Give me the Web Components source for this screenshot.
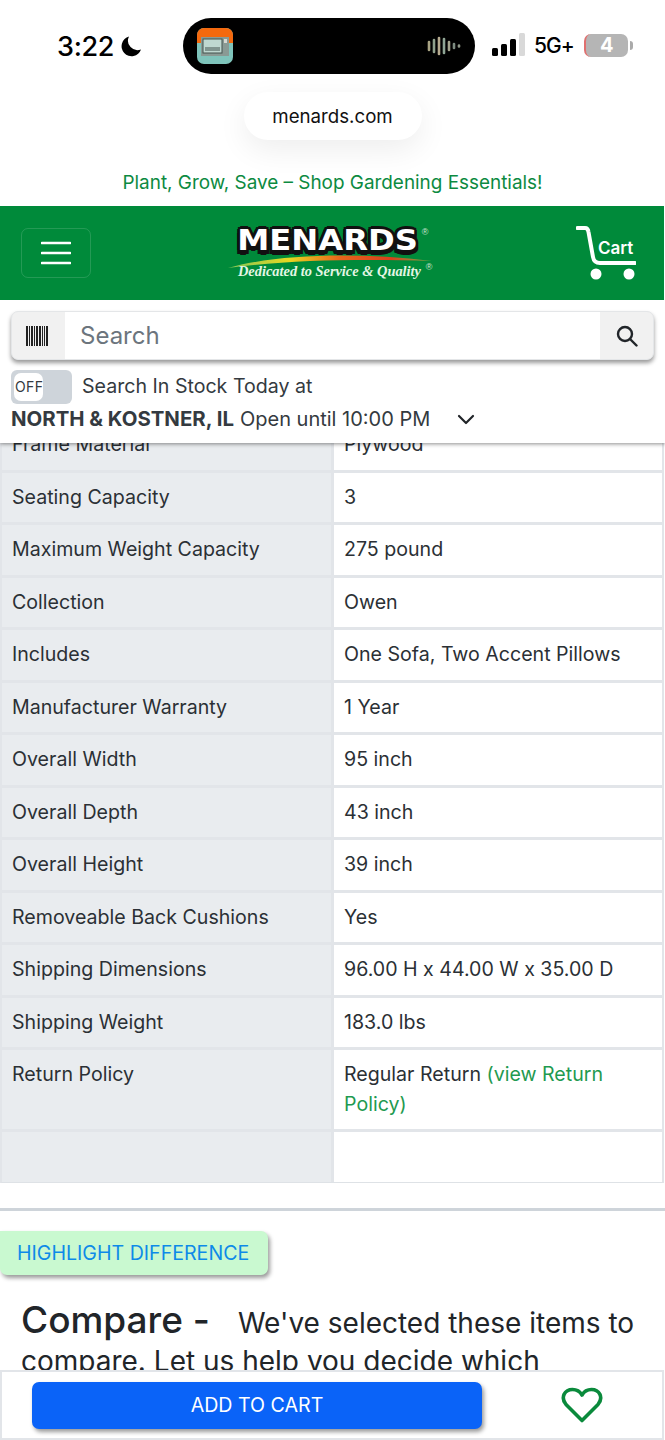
<!DOCTYPE html>
<html lang="en">
<head>
<meta charset="utf-8">
<title>Menards</title>
<style>
  html, body { margin: 0; background: #fff; }
  body { font-family: Inter, "Liberation Sans", sans-serif; color: #212529; }
  product-page { width: 665px; height: 1440px; }
  a { color: #1f9a50; text-decoration: none; }
</style>
</head>
<body>
<product-page>
  <phone-status slot="top"></phone-status>
  <site-pill slot="top">menards.com</site-pill>
  <promo-line slot="top">Plant, Grow, Save – Shop Gardening Essentials!</promo-line>
  <menards-header slot="top"></menards-header>
  <search-bar slot="top"></search-bar>
  <stock-filter slot="top"></stock-filter>

  <spec-table>
    <spec-row label="Frame Material">Plywood</spec-row>
    <spec-row label="Seating Capacity">3</spec-row>
    <spec-row label="Maximum Weight Capacity">275 pound</spec-row>
    <spec-row label="Collection">Owen</spec-row>
    <spec-row label="Includes">One Sofa, Two Accent Pillows</spec-row>
    <spec-row label="Manufacturer Warranty">1 Year</spec-row>
    <spec-row label="Overall Width">95 inch</spec-row>
    <spec-row label="Overall Depth">43 inch</spec-row>
    <spec-row label="Overall Height">39 inch</spec-row>
    <spec-row label="Removeable Back Cushions">Yes</spec-row>
    <spec-row label="Shipping Dimensions">96.00 H x 44.00 W x 35.00 D</spec-row>
    <spec-row label="Shipping Weight">183.0 lbs</spec-row>
    <spec-row label="Return Policy"><div>Regular Return <a href="#">(view Return</a></div><div><a href="#">Policy)</a></div></spec-row>
    <spec-row label="">&nbsp;</spec-row>
  </spec-table>
  <compare-intro></compare-intro>

  <cart-bar slot="bottom"></cart-bar>
</product-page>

<script>
// helper: every element gets its markup in an open shadow root
const define = (name, html, setup) => {
  const template = document.createElement('template')
  template.innerHTML = html

  customElements.define(name, class extends HTMLElement {
    constructor () {
      super()
      this.attachShadow({ mode: 'open' })
      this.shadowRoot.appendChild(template.content.cloneNode(true))
    }

    connectedCallback () {
      if (setup) setup(this)
    }
  })
}

define('product-page', `
<style>
  :host { display: flex; flex-direction: column; position: relative; overflow: hidden; }
  .top { position: relative; z-index: 2; background: #fff; height: 443px; box-shadow: 0 1px 4px rgba(0,0,0,.45); flex: none; }
  .content { flex: 1; overflow: hidden; }
  .inner { margin-top: -23px; }
  .bottom { position: absolute; left: 0; right: 0; bottom: 0; z-index: 3; }
</style>
<div class="top"><slot name="top"></slot></div>
<div class="content"><div class="inner"><slot></slot></div></div>
<div class="bottom"><slot name="bottom"></slot></div>
`)

define('phone-status', `
<style>
  :host { display: flex; align-items: center; height: 56px; padding: 18px 0 0 57px; color: #000; }
  .time { font: 500 27px/1 Inter, sans-serif; width: 56px; letter-spacing: -.3px; }
  .moon { margin-left: 7px; width: 22px; height: 22px; }
  .island { margin-left: 41px; width: 292px; height: 56px; border-radius: 28px; background: #000; display: flex; align-items: center; justify-content: space-between; padding: 0 14px; box-sizing: border-box; }
  .right { display: flex; align-items: center; margin-left: 16px; }
  .net { font: 500 21px/1 Inter, sans-serif; margin: -2px 0 0 9px; letter-spacing: -1px; }
  .batt { display: flex; align-items: center; margin: -2px 0 0 10px; }
  .cell { width: 44px; height: 23px; border-radius: 7px; background: #b5b5b5; border-left: 2px solid #e0706f; box-sizing: border-box; color: #fff; font: 700 20px/23px Inter, sans-serif; text-align: center; }
  .nub { width: 3px; height: 9px; margin-left: 2px; background: #aaa; border-radius: 0 3px 3px 0; }
</style>
<span class="time">3:22</span>
<svg class="moon" viewBox="0 0 22 22"><path d="M9 1.5A10 10 0 1 0 21 14.5 9.5 9.5 0 0 1 9 1.5Z" fill="#000"/></svg>
<div class="island">
  <svg width="36" height="36" viewBox="0 0 36 36">
    <rect width="36" height="36" rx="7" fill="#7fc4bb"/>
    <path d="M0 15V7a7 7 0 0 1 7-7h22a7 7 0 0 1 7 7v8Z" fill="#f4690e"/>
    <rect x="4" y="9" width="28" height="19" fill="#8a9a94"/>
    <rect x="6" y="11" width="19" height="14" fill="#bfd8d0" stroke="#43524e"/>
    <path d="M8 20h15M8 22h15" stroke="#43524e"/>
    <rect x="27" y="11" width="3" height="4" fill="#d8d8d0"/>
  </svg>
  <svg width="34" height="20" viewBox="0 0 34 20" stroke-width="2.6" stroke-linecap="round">
    <path d="M2 6v8" stroke="#a8a383"/><path d="M7 4v12" stroke="#8fa08c"/><path d="M12 2v16" stroke="#b6aa8e"/>
    <path d="M17 3v14" stroke="#8fa595"/><path d="M22 6v8" stroke="#a5a58e"/><path d="M27 8v4" stroke="#7d8b80"/><path d="M32 9.5v1" stroke="#8f9788"/>
  </svg>
</div>
<div class="right">
  <svg width="34" height="28" viewBox="0 0 34 28" style="margin-top:-3px">
    <rect x="1" y="17" width="6" height="8" rx="1.5"/><rect x="10" y="13" width="6" height="12" rx="1.5"/>
    <rect x="19" y="8" width="6" height="17" rx="1.5"/><rect x="28" y="2" width="6" height="23" rx="1.5" fill="#d9d9d9"/>
  </svg>
  <span class="net">5G+</span>
  <span class="batt"><span class="cell">4</span><span class="nub"></span></span>
</div>
`)

define('site-pill', `
<style>
  :host { display: block; width: 178px; height: 48px; margin: 18px auto 0; background: #fff; border-radius: 24px;
    box-shadow: 0 10px 30px rgba(0,0,0,.07); font: 400 18.7px/50px Inter, sans-serif; color: #111; text-align: center; }
</style>
<slot></slot>
`)

define('promo-line', `
<style>
  :host { display: block; margin-top: 30px; height: 36px; font: 400 18.9px/26px Inter, sans-serif; color: #0c8a41; text-align: center; }
</style>
<slot></slot>
`)

define('menards-header', `
<style>
  :host { display: flex; align-items: center; justify-content: space-between; height: 94px; margin-right: 1px; background: #008a3a; padding: 0 28px 0 21px; box-sizing: border-box; }
  .burger { width: 70px; height: 50px; border: 1px solid rgba(255,255,255,.14); border-radius: 7px; box-sizing: border-box; display: flex; align-items: center; justify-content: center; }
  .logo { position: relative; isolation: isolate; width: 206px; display: flex; flex-direction: column; align-items: center; margin-left: -8px; color: #fff; }
  .name { font: 700 28px/28px "DejaVu Sans", sans-serif; height: 28px; margin-right: 4px; white-space: nowrap; transform: scaleX(1.15);
    text-shadow: 2.5px 0 0 #111, -2.5px 0 0 #111, 0 3px 0 #111, 0 -3px 0 #111, 2px 2px 0 #111, -2px 2px 0 #111, 2px -2px 0 #111, -2px -2px 0 #111, 2.5px 4px 0 #111, -2.5px 4px 0 #111, 0 5px 0 #111; }
  .reg { position: absolute; font: 400 9px/1 "Liberation Sans", sans-serif; color: #cfe5d5; }
  .reg.a { right: 4px; top: 1px; }
  .reg.b { right: 0; top: 36px; }
  .swoosh { position: absolute; left: 0; top: 19px; z-index: -1; }
  .tag { position: relative; font: italic 700 14.4px/16px "Liberation Serif", serif; color: #e4f6e4; margin-top: 8px; white-space: nowrap; }
  .cart { position: relative; width: 60px; height: 54px; display: block; }
  .cart span { position: absolute; left: 22px; top: 10px; font: 600 17px/24px Inter, sans-serif; color: #fff; }
</style>
<div class="burger">
  <svg width="30" height="24" viewBox="0 0 30 24" stroke="#fff" stroke-width="2.6" stroke-linecap="round"><path d="M1 2h28M1 12h28M1 22h28"/></svg>
</div>
<div class="logo">
  <svg class="swoosh" width="206" height="24" viewBox="0 0 206 24">
    <defs><linearGradient id="sw" x1="0" x2="1"><stop offset="0" stop-color="#7fc65a"/><stop offset=".3" stop-color="#e9d821"/><stop offset=".55" stop-color="#e8641a"/><stop offset=".8" stop-color="#d8401c"/><stop offset="1" stop-color="#6fb04a"/></linearGradient></defs>
    <path d="M1 22C50 8 130 6 205 15 130 13 60 14 1 22Z" fill="url(#sw)"/>
  </svg>
  <div class="name">MENARDS</div>
  <div class="tag">Dedicated to Service &amp; Quality</div>
  <span class="reg a">®</span><span class="reg b">®</span>
</div>
<div class="cart">
  <svg width="60" height="54" viewBox="0 0 60 54" fill="none">
    <path d="M1.5 2H9Q12 2 12.5 6L17 31Q18 37 24 37H59" stroke="#fff" stroke-width="4" stroke-linecap="round"/>
    <circle cx="20" cy="48" r="5.5" fill="#fff"/><circle cx="53" cy="48" r="5.5" fill="#fff"/>
  </svg>
  <span>Cart</span>
</div>
`)

define('search-bar', `
<style>
  :host { display: flex; height: 49px; margin: 11px 11px 0; border-radius: 7px; background: #f1f1f1; box-shadow: 0 3px 4px rgba(0,0,0,.4); border: 1px solid #e4e6e8; box-sizing: border-box; }
  .addon { width: 53px; flex: none; display: flex; align-items: center; justify-content: center; }
  .input { flex: 1; background: #fff; padding-left: 15px; font: 400 24px/47px Inter, sans-serif; color: #6c757d; }
</style>
<div class="addon">
  <svg width="22" height="20" viewBox="0 0 22 20" fill="#222" style="margin-right:3px"><rect x="0" width="2" height="20"/><rect x="3" width="1" height="20"/><rect x="5" width="2" height="20"/><rect x="8" width="1" height="20"/><rect x="10" width="2" height="20"/><rect x="13" width="2" height="20"/><rect x="16" width="1" height="20"/><rect x="18" width="1" height="20"/><rect x="20" width="2" height="20"/></svg>
</div>
<div class="input">Search</div>
<div class="addon">
  <svg width="22" height="22" viewBox="0 0 22 22" fill="none" stroke="#212529" stroke-width="2.4"><circle cx="9" cy="9" r="7"/><path d="M14 14l6.5 6.5" stroke-linecap="round"/></svg>
</div>
`)

define('stock-filter', `
<style>
  :host { display: block; margin: 10px 0 0 11px; font: 400 19.6px/1 Inter, sans-serif; color: #343a40; }
  .line { display: flex; align-items: center; }
  .switch { width: 61px; height: 34px; border-radius: 6px; background: #ced4da; box-sizing: border-box; padding: 3px; margin-right: 10px; }
  .knob { width: 28px; height: 28px; border-radius: 7px; background: #fff; font: 400 14px/28px Inter, sans-serif; letter-spacing: .4px; color: #343a40; padding-left: 1px; }
  .place { margin-top: 3px; height: 24px; }
  b { font-weight: 700; font-size: 20.4px; margin-right: 6px; }
  .open { font-size: 20px; }
  svg { margin-left: 27px; }
</style>
<div class="line">
  <div class="switch"><div class="knob">OFF</div></div>
  <span>Search In Stock Today at</span>
</div>
<div class="line place">
  <b>NORTH &amp; KOSTNER, IL</b><span class="open">Open until 10:00 PM</span>
  <svg width="18" height="11" viewBox="0 0 18 11" fill="none" stroke="#212529" stroke-width="2.2" stroke-linecap="round" stroke-linejoin="round"><path d="M2 2l7 7 7-7"/></svg>
</div>
`)

define('spec-table', `
<style>
  :host { display: block; margin-right: 1px; border-bottom: 1px solid #dee2e6; border-left: 2px solid #e2e5e9; border-right: 2px solid #e2e5e9; }
</style>
<slot></slot>
`)

define('spec-row', `
<style>
  :host { display: grid; grid-template-columns: 329px 1fr; column-gap: 3px; background: #e2e5e9; padding-bottom: 3px; font: 400 19.6px/29.5px Inter, sans-serif; color: #2b3035; }
  :host(:last-child) { padding-bottom: 0; }
  .label, .value { padding: 10px; min-height: 29.5px; }
  .label { background: #e9ecef; }
  .value { background: #fff; }
</style>
<div class="label"></div>
<div class="value"><slot></slot></div>
`, el => {
  el.shadowRoot.querySelector('.label').textContent = el.getAttribute('label')
})

define('compare-intro', `
<style>
  :host { display: block; }
  hr { height: 3px; border: 0; background: #ced4da; margin: 25px 0 20px; }
  button { display: block; width: 268px; height: 44px; border: 0; border-radius: 0 7px 7px 7px; background: #c9f9d0; color: #0d8ae8; font: 400 19.6px/44px Inter, sans-serif; padding: 0 0 0 17px; text-align: left; box-shadow: 2px 3px 4px rgba(0,0,0,.4); }
  .intro { margin: 26px 0 0; padding: 0 21px; font: 400 28px/38px Inter, sans-serif; color: #212529; white-space: nowrap; }
  .first { display: flex; align-items: baseline; }
  strong { font-size: 37px; font-weight: 500; margin-right: 28px; }
</style>
<hr>
<button>HIGHLIGHT DIFFERENCE</button>
<div class="intro">
  <div class="first"><strong>Compare -</strong><span>We've selected these items to</span></div>
  <div>compare. Let us help you decide which</div>
</div>
`)

define('cart-bar', `
<style>
  :host { display: flex; align-items: center; height: 70px; background: #fff; border: 2px solid #e2e5e9; box-sizing: border-box; padding-left: 30px; margin-right: 1px; }
  button { width: 450px; height: 47px; border: 0; border-radius: 7px; background: #0a63f8; color: #fff; font: 400 19.6px/45px Inter, sans-serif; box-shadow: 2px 3px 4px rgba(0,0,0,.4); }
  svg { margin-left: 79px; }
</style>
<button>ADD TO CART</button>
<svg width="42" height="36" viewBox="0 0 42 36" fill="none"><path d="M21 33.5 5 17.5C-1 10 4 2.5 11.5 2.5 15.5 2.5 19 4.5 21 8 23 4.5 26.5 2.5 30.5 2.5 38 2.5 43 10 37 17.5Z" stroke="#0a8a3c" stroke-width="3.6" stroke-linejoin="round"/></svg>
`)
</script>
</body>
</html>
